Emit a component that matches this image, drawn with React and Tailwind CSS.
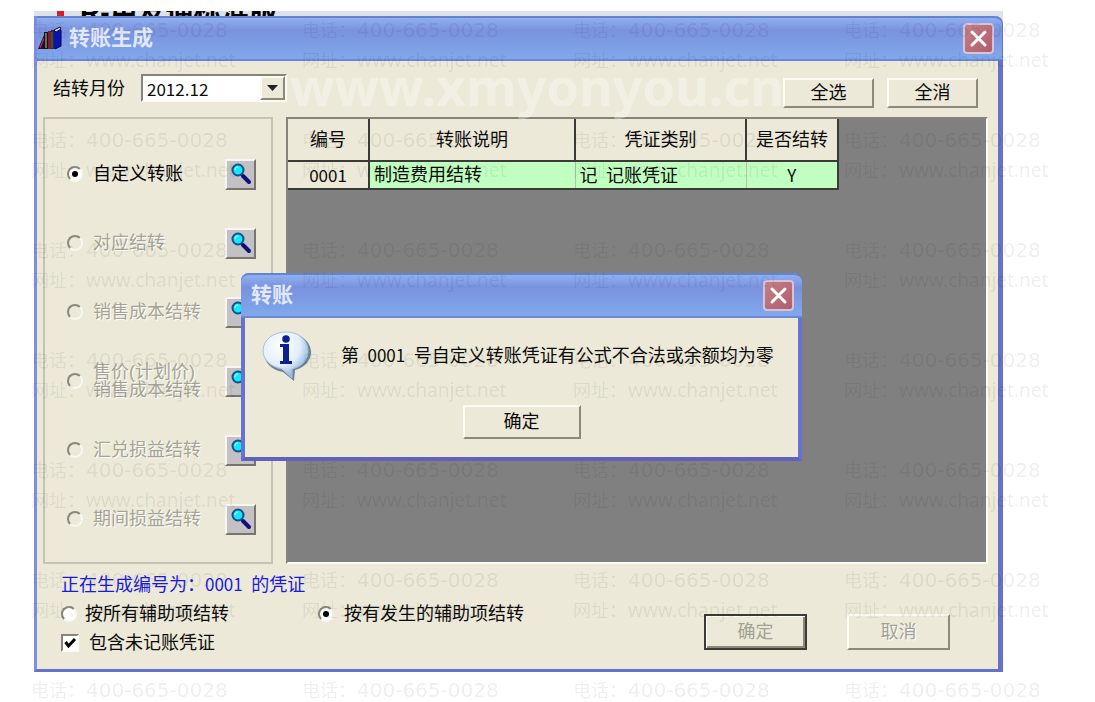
import { useState } from "react";

const transferTypes = [
  { id: "custom", label: ["自定义转账"], enabled: true },
  { id: "match", label: ["对应结转"] },
  { id: "cost", label: ["销售成本结转"] },
  { id: "price", label: ["售价(计划价)", "销售成本结转"] },
  { id: "exchange", label: ["汇兑损益结转"] },
  { id: "period", label: ["期间损益结转"] },
];

const radioClass =
  "grid size-4 shrink-0 appearance-none place-items-center rounded-full border-2 border-t-[#8a887c] border-l-[#8a887c] border-r-[#f8f7f0] border-b-[#f8f7f0] bg-white disabled:bg-[#ece9d8] checked:after:block checked:after:size-[6px] checked:after:rounded-full checked:after:bg-black checked:after:content-['']";

const raisedClass =
  "border-2 border-t-[#fbfaf3] border-l-[#fbfaf3] border-r-[#8c897b] border-b-[#8c897b] bg-[#ece9d8]";

const Num = ({ children }) => (
  <span className="font-['Noto_Sans_CJK_SC',sans-serif] text-[17px] leading-none">{children}</span>
);

const BooksIcon = () => (
  <svg width="26" height="26" viewBox="0 0 26 26" aria-hidden="true">
    <path d="M1 23 L7 9 L9 10 L7 23 Z" fill="#20102e" />
    <path d="M3 22 L7 12" stroke="#b02050" strokeWidth="1.5" />
    <rect x="7" y="6" width="4" height="17" fill="#141414" />
    <path d="M9 7 V22" stroke="#c9c39a" strokeWidth="1" />
    <rect x="11" y="5" width="3" height="18" fill="#8c1238" />
    <rect x="14" y="4" width="3" height="19" fill="#2a2a2a" />
    <path d="M15 6 V22" stroke="#2f8a5c" strokeWidth="1" />
    <path d="M17 4 L23 1 L24 3 V20 L18 23 H17 Z" fill="#0b12b8" />
    <path d="M17 4 L23 1 L24 3 L19 6 Z" fill="#d5dbf5" stroke="#101040" strokeWidth="1" />
    <path d="M24 4 V20 L18 23" fill="none" stroke="#05053c" strokeWidth="1" />
  </svg>
);

const SearchIcon = () => (
  <svg width="25" height="25" viewBox="0 0 25 25" aria-hidden="true">
    <path d="M15 14 L21 20" stroke="#10107c" strokeWidth="4" strokeLinecap="round" />
    <path d="M13 12 L16 15" stroke="#10107c" strokeWidth="2" />
    <circle cx="10" cy="8" r="5.5" fill="#12e8fa" stroke="#124f8c" strokeWidth="2" />
    <path d="M7 8 a3 3 0 0 1 3 -3" fill="none" stroke="#b4fbff" strokeWidth="1.2" />
  </svg>
);

const InfoIcon = () => (
  <svg width="52" height="52" viewBox="0 0 52 52" aria-hidden="true">
    <defs>
      <radialGradient id="bubble" cx="0.4" cy="0.3" r="0.7">
        <stop offset="0" stopColor="#ffffff" />
        <stop offset="0.6" stopColor="#e3effb" />
        <stop offset="1" stopColor="#86b2e2" />
      </radialGradient>
    </defs>
    <path
      d="M26 3 C39 3 50 11 50 22 C50 31 43 38 34 40 L33 51 L22 42 C10 40 3 32 3 22 C3 11 13 3 26 3 Z"
      fill="#4f6987"
      opacity="0.8"
    />
    <path
      d="M25 2 C38 2 47 10 47 21 C47 30 40 37 31 39 L31 48 L21 39 C10 37 2 30 2 21 C2 10 12 2 25 2 Z"
      fill="url(#bubble)"
      stroke="#a9c1d8"
      strokeWidth="1"
    />
    <circle cx="25" cy="9" r="3.8" fill="#0c2191" />
    <path d="M19 14 H28 V31 H31 V34 H19 V31 H22 V17 H19 Z" fill="#0c2191" />
  </svg>
);

const CloseButton = ({ onClick }) => (
  <button
    type="button"
    aria-label="关闭"
    onClick={onClick}
    className="grid size-[31px] place-items-center rounded-[4px] border-2 border-[#d5c3dc] bg-gradient-to-br from-[#c38088] to-[#b25c6c]"
  >
    <svg width="19" height="19" viewBox="0 0 19 19" aria-hidden="true">
      <path d="M3 3 L16 16 M16 3 L3 16" stroke="#fff" strokeWidth="3" strokeLinecap="round" />
    </svg>
  </button>
);

const titleBar =
  "flex h-[45px] items-center justify-between border-t-2 border-b-2 border-t-[#6484d2] border-b-[#6d86d6] bg-gradient-to-b from-[#8fb0f0] via-[#7a92de] via-30% to-[#80a8ec]";

const TransferOption = ({ type, selected, onSelect }) => (
  <div className="flex h-8 items-center">
    <label
      className={`flex flex-1 items-center gap-[10px] whitespace-nowrap ${
        type.enabled ? "text-black" : "text-[#a5a394] [text-shadow:1px_1px_0_#ffffff]"
      }`}
    >
      <input
        type="radio"
        name="transfer"
        className={radioClass}
        checked={selected}
        disabled={!type.enabled}
        onChange={() => onSelect(type.id)}
      />
      <span className="leading-[18px]">
        {type.label.map((line) => (
          <span key={line} className="block">
            {line}
          </span>
        ))}
      </span>
    </label>
    <button
      type="button"
      aria-label={type.label.join("")}
      className="grid size-[31px] place-items-center border-2 border-t-[#f7f6f2] border-l-[#f7f6f2] border-r-[#77756d] border-b-[#77756d] bg-[#c3c1c4]"
    >
      <SearchIcon />
    </button>
  </div>
);

const VoucherTable = () => (
  <table className="table-fixed border-collapse bg-[#ece9d8]">
    <colgroup>
      <col className="w-[81px]" />
      <col className="w-[206px]" />
      <col className="w-[171px]" />
      <col className="w-[92px]" />
    </colgroup>
    <thead>
      <tr className="h-[42px]">
        {["编号", "转账说明", "凭证类别", "是否结转"].map((h) => (
          <th
            key={h}
            className="border-r-2 border-b-2 border-[#3a3a36] p-0 font-normal whitespace-nowrap"
          >
            {h}
          </th>
        ))}
      </tr>
    </thead>
    <tbody>
      <tr className="h-7 bg-[#c0ffc0]">
        <td className="border-r-2 border-b-2 border-[#3a3a36] bg-[#ece9d8] p-0 text-center leading-none">
          <Num>0001</Num>
        </td>
        <td className="border-r border-b-2 border-r-[#a9c9a9] border-b-[#3a3a36] p-0 pl-1 leading-none">
          制造费用结转
        </td>
        <td className="border-r border-b-2 border-r-[#a9c9a9] border-b-[#3a3a36] p-0 pl-1 leading-none">
          记<Num>&ensp;</Num>记账凭证
        </td>
        <td className="border-r-2 border-b-2 border-[#3a3a36] p-0 text-center leading-none">
          <Num>Y</Num>
        </td>
      </tr>
    </tbody>
  </table>
);

const MessageDialog = ({ onClose }) => (
  <div
    role="dialog"
    aria-label="转账"
    className="absolute top-[273px] left-[241px] w-[561px] rounded-t-lg border-x-4 border-b-4 border-[#6672d2] border-b-[#6262bc] bg-[#ece9d8]"
  >
    <div className={`${titleBar} -mx-1 rounded-t-lg pr-2 pl-[10px]`}>
      <h2 className="text-[21px] font-bold text-[#e2e9ff]">转账</h2>
      <CloseButton onClick={onClose} />
    </div>
    <div className="flex items-center gap-7 pt-3 pl-4">
      <InfoIcon />
      <p className="whitespace-nowrap">
        第<Num>&ensp;0001&ensp;</Num>号自定义转账凭证有公式不合法或余额均为零
      </p>
    </div>
    <div className="flex justify-center pt-[23px] pb-[18px]">
      <button type="button" onClick={onClose} className={`${raisedClass} h-[34px] w-[118px]`}>
        确定
      </button>
    </div>
  </div>
);

const Watermark = () => (
  <div
    aria-hidden="true"
    className="pointer-events-none absolute inset-0 overflow-hidden font-['Noto_Sans','Noto_Sans_CJK_SC',sans-serif] text-black/8"
  >
    <div className="absolute top-[46px] left-[290px] text-[52px] leading-[80px] font-bold text-white/35">
      www.xmyonyou.cn
    </div>
    <div className="grid auto-rows-[110px] grid-cols-[repeat(4,271px)] pl-[31px]">
      {Array.from({ length: 28 }, (_, i) => (
        <div key={i} className="pt-[15px] whitespace-nowrap">
          <div className="flex leading-[30px]">
            <span className="w-[55px] text-lg leading-[30px]">电话：</span>
            <span className="font-['DejaVu_Sans',sans-serif] text-xl leading-[30px]">
              400-665-0028
            </span>
          </div>
          {i < 24 && (
            <div className="flex">
              <span className="w-[55px] text-lg leading-[30px]">网址：</span>
              <span className="text-[19px] leading-[30px]">www.chanjet.net</span>
            </div>
          )}
        </div>
      ))}
    </div>
  </div>
);

export default function App() {
  const [type, setType] = useState("custom");
  const [scope, setScope] = useState("occurred");
  const [unposted, setUnposted] = useState(true);
  const [open, setOpen] = useState(true);

  return (
    <div className="relative min-h-screen overflow-hidden bg-white pt-[11px] pr-[92px] pl-[34px] font-['Liberation_Sans','Noto_Sans_CJK_SC',sans-serif] text-lg text-[#0c0c0c]">
      <div className="bg-[#dde2e8]">
        {/* bottom edge of the parent window's caption */}
        <div className="flex h-[5px] items-end overflow-hidden pl-[23px]">
          <span className="h-[5px] w-[7px] bg-[#d81c2c]" />
          <span className="pl-4 text-[28px] leading-[6px] font-bold whitespace-nowrap text-black">
            R-用友通标准版
          </span>
        </div>
        <main className="rounded-tr-lg border-r-[5px] border-b-[3px] border-l-[3px] border-[#6472cc] border-l-[#7f8fdc] bg-[#ece9d8]">
          <div className={`${titleBar} -mr-1 rounded-tr-lg pr-2`}>
            <div className="flex items-center gap-[6px]">
              <BooksIcon />
              <h1 className="text-[21px] font-bold text-[#e2e9ff]">转账生成</h1>
            </div>
            <CloseButton />
          </div>

          <div className="flex h-14 items-center justify-between pr-5 pl-4">
            <div className="flex items-center gap-4">
              <label htmlFor="month">结转月份</label>
              <div className="relative">
                <select
                  id="month"
                  className="h-7 w-[146px] appearance-none border-2 border-t-[#85837a] border-l-[#85837a] border-r-[#fbfaf3] border-b-[#fbfaf3] bg-white pl-1 font-['Noto_Sans_CJK_SC',sans-serif] text-[17px] leading-none"
                >
                  <option>2012.12</option>
                </select>
                <span
                  className={`${raisedClass} pointer-events-none absolute top-[2px] right-[2px] grid h-6 w-[25px] place-items-center`}
                >
                  <svg width="11" height="6" viewBox="0 0 11 6" aria-hidden="true">
                    <path d="M0 0 H11 L5.5 6 Z" fill="#222" />
                  </svg>
                </span>
              </div>
            </div>
            <div className="flex gap-[13px] pt-2">
              <button type="button" className={`${raisedClass} h-[30px] w-[91px] leading-none`}>
                全选
              </button>
              <button type="button" className={`${raisedClass} h-[30px] w-[91px] leading-none`}>
                全消
              </button>
            </div>
          </div>

          <div className="flex gap-[13px] pr-[10px] pl-[6px]">
            <fieldset className="flex h-[447px] w-[230px] shrink-0 flex-col gap-[37px] border-2 border-[#c6c3b4] pt-[39px] pr-[15px] pl-[22px]">
              {transferTypes.map((t) => (
                <TransferOption key={t.id} type={t} selected={type === t.id} onSelect={setType} />
              ))}
            </fieldset>
            <div className="flex-1 border-2 border-t-[#85837a] border-l-[#85837a] border-r-[#fbfaf3] border-b-[#fbfaf3] bg-[#808080]">
              <VoucherTable />
            </div>
          </div>

          <div className="flex justify-between pt-[7px] pr-12 pb-3 pl-6">
            <div>
              <p className="leading-[28px] text-[#1a1ae0]">
                正在生成编号为：<Num>0001&ensp;</Num>的凭证
              </p>
              <div className="flex h-[30px] items-center">
                <label className="flex w-[257px] items-center gap-2">
                  <input
                    type="radio"
                    name="scope"
                    className={radioClass}
                    checked={scope === "all"}
                    onChange={() => setScope("all")}
                  />
                  按所有辅助项结转
                </label>
                <label className="flex items-center gap-[10px]">
                  <input
                    type="radio"
                    name="scope"
                    className={radioClass}
                    checked={scope === "occurred"}
                    onChange={() => setScope("occurred")}
                  />
                  按有发生的辅助项结转
                </label>
              </div>
              <label className="flex h-[28px] items-center gap-[10px]">
                <span className="relative flex">
                  <input
                    type="checkbox"
                    className="size-[18px] appearance-none border-2 border-t-[#85837a] border-l-[#85837a] border-r-[#fbfaf3] border-b-[#fbfaf3] bg-white"
                    checked={unposted}
                    onChange={() => setUnposted(!unposted)}
                  />
                  {unposted && (
                    <svg
                      className="pointer-events-none absolute inset-0"
                      width="18"
                      height="18"
                      viewBox="0 0 18 18"
                      aria-hidden="true"
                    >
                      <path d="M4.5 8 L7.5 12 L14 5" fill="none" stroke="#000" strokeWidth="3" />
                    </svg>
                  )}
                </span>
                包含未记账凭证
              </label>
            </div>
            <div className="flex items-end gap-10 pb-[7px]">
              <button
                type="button"
                disabled
                className="h-9 w-[103px] border-2 border-[#3c3a34] bg-[#ece9d8] text-[#a3a193] shadow-[inset_1px_1px_0_#fff,inset_-2px_-2px_0_#8c897b]"
              >
                确定
              </button>
              <button
                type="button"
                disabled
                className={`${raisedClass} h-9 w-[103px] text-[#a3a193] [text-shadow:1px_1px_0_#ffffff]`}
              >
                取消
              </button>
            </div>
          </div>
        </main>
      </div>
      {open && <MessageDialog onClose={() => setOpen(false)} />}
      <Watermark />
    </div>
  );
}
